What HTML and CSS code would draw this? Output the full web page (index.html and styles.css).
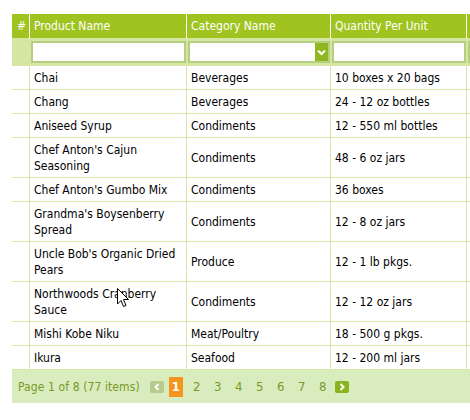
FILE: index.html
```html
<!DOCTYPE html>
<html>
<head>
<meta charset="utf-8">
<link rel="stylesheet" href="styles.css">
</head>
<body>
<div class="grid">
  <div class="row head">
    <div class="c c-num">#</div>
    <div class="c">Product Name</div>
    <div class="c">Category Name</div>
    <div class="c">Quantity Per Unit</div>
    <div class="c"></div>
  </div>
  <div class="row filter">
    <div class="c c-num"></div>
    <div class="c"><div class="input"></div></div>
    <div class="c"><div class="input combo"><span class="drop"><svg width="9" height="7" viewBox="0 0 9 7"><path d="M1 1.5 L4.5 5 L8 1.5" fill="none" stroke="#fff" stroke-width="2"/></svg></span></div></div>
    <div class="c"><div class="input"></div></div>
    <div class="c"><div class="input"></div></div>
  </div>
  <div class="row"><div class="c c-num"></div><div class="c">Chai</div><div class="c">Beverages</div><div class="c">10 boxes x 20 bags</div><div class="c"></div></div>
  <div class="row"><div class="c c-num"></div><div class="c">Chang</div><div class="c">Beverages</div><div class="c">24 - 12 oz bottles</div><div class="c"></div></div>
  <div class="row"><div class="c c-num"></div><div class="c">Aniseed Syrup</div><div class="c">Condiments</div><div class="c">12 - 550 ml bottles</div><div class="c"></div></div>
  <div class="row"><div class="c c-num"></div><div class="c">Chef Anton's Cajun Seasoning</div><div class="c">Condiments</div><div class="c">48 - 6 oz jars</div><div class="c"></div></div>
  <div class="row"><div class="c c-num"></div><div class="c">Chef Anton's Gumbo Mix</div><div class="c">Condiments</div><div class="c">36 boxes</div><div class="c"></div></div>
  <div class="row"><div class="c c-num"></div><div class="c">Grandma's Boysenberry Spread</div><div class="c">Condiments</div><div class="c">12 - 8 oz jars</div><div class="c"></div></div>
  <div class="row"><div class="c c-num"></div><div class="c">Uncle Bob's Organic Dried Pears</div><div class="c">Produce</div><div class="c">12 - 1 lb pkgs.</div><div class="c"></div></div>
  <div class="row"><div class="c c-num"></div><div class="c">Northwoods Cranberry Sauce</div><div class="c">Condiments</div><div class="c">12 - 12 oz jars</div><div class="c"></div></div>
  <div class="row"><div class="c c-num"></div><div class="c">Mishi Kobe Niku</div><div class="c">Meat/Poultry</div><div class="c">18 - 500 g pkgs.</div><div class="c"></div></div>
  <div class="row"><div class="c c-num"></div><div class="c">Ikura</div><div class="c">Seafood</div><div class="c">12 - 200 ml jars</div><div class="c"></div></div>
  <div class="pager">
    <span class="summary">Page 1 of 8 (77 items)</span>
    <span class="nav prev"><svg width="6" height="8" viewBox="0 0 6 8"><path d="M4.5 1 L1.5 4 L4.5 7" fill="none" stroke="#fff" stroke-width="2"/></svg></span>
    <span class="pages">
      <span class="pg current">1</span>
      <span class="pg">2</span>
      <span class="pg">3</span>
      <span class="pg">4</span>
      <span class="pg">5</span>
      <span class="pg">6</span>
      <span class="pg">7</span>
      <span class="pg">8</span>
    </span>
    <span class="nav next"><svg width="6" height="8" viewBox="0 0 6 8"><path d="M1.5 1 L4.5 4 L1.5 7" fill="none" stroke="#fff" stroke-width="2"/></svg></span>
  </div>
  <svg class="cursor" width="13" height="20" viewBox="0 0 13 20"><path d="M0.5 0.5 L0.5 16 L4 12.5 L6.5 18.5 L9 17.5 L6.5 11.5 L11.5 11.5 Z" fill="#fff" stroke="#000" stroke-width="1"/></svg>
</div>
</body>
</html>
```
FILE: styles.css
```css
html, body {
  margin: 0;
  padding: 0;
  overflow: hidden;
  background: #fff;
}
body {
  padding: 14px 0 0 12px;
  font-family: "DejaVu Sans Condensed", "DejaVu Sans", sans-serif;
  font-size: 12px;
  color: #000;
}
.grid {
  width: 520px;
  position: relative;
}
.row {
  display: grid;
  grid-template-columns: 18px 157px 144px 136px 65px;
  border-bottom: 1px solid #d8e7a6;
}
.c {
  border-right: 1px solid #d8e7a6;
  padding: 4px 4px 3px 4px;
  line-height: 16px;
  display: flex;
  align-items: center;
  overflow: hidden;
}
.head {
  background: #9fc420;
  color: #fff;
  border-bottom: none;
  height: 24px;
}
.head .c {
  border-right: 1px solid #fff;
  padding: 0 4px;
  white-space: nowrap;
}
.head .c-num {
  padding: 0 0 0 5px;
}
.filter {
  background: #d6e7a4;
  border-bottom: none;
  height: 28px;
}
.filter .c {
  border-right: none;
  padding: 3px 1px 3px 1px;
}
.input {
  flex: 1;
  height: 22px;
  box-sizing: border-box;
  background: #fff;
  border: 2px solid #b6ce80;
  position: relative;
  display: flex;
  justify-content: flex-end;
  align-items: center;
}
.drop {
  width: 13px;
  height: 18px;
  background: #8fb81e;
  display: flex;
  align-items: center;
  justify-content: center;
}
.pager {
  background: #d8ecbd;
  height: 33px;
  display: flex;
  align-items: center;
  padding-left: 6px;
  color: #7a992a;
  font-size: 12px;
}
.summary {
  margin-right: 10px;
  letter-spacing: 0.1px;
}
.nav {
  width: 14px;
  height: 12px;
  border-radius: 2px;
  display: flex;
  align-items: center;
  justify-content: center;
}
.prev { background: #b6ca8c; }
.next { background: #8ab41d; }
.pages {
  display: flex;
  gap: 7px;
  margin: 0 5px;
}
.pg {
  width: 14px;
  height: 20px;
  display: flex;
  align-items: center;
  justify-content: center;
  font-size: 13px;
}
.pg.current {
  background: #f7941d;
  color: #fff;
  font-weight: bold;
}
.cursor {
  position: absolute;
  left: 105px;
  top: 274px;
}
```
